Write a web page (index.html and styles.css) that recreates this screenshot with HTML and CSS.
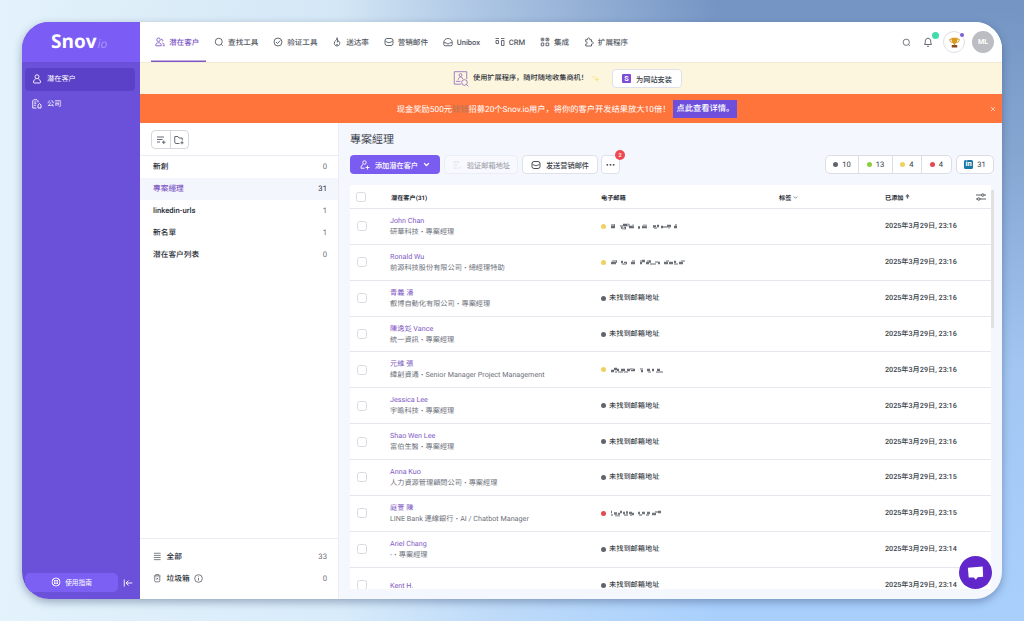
FILE: index.html
```html
<!DOCTYPE html>
<html lang="zh-CN">

<head>
  <meta charset="UTF-8">
  <meta name="viewport" content="width=device-width, initial-scale=1.0">
  <title>Snov.io</title>
  <link rel="stylesheet" href="styles.css">
</head>

<body>
  <!-- shared icons -->
  <svg class="sprite" xmlns="http://www.w3.org/2000/svg">
    <symbol id="i-mail" viewBox="0 0 20 20"><rect x="2" y="3" width="16" height="14" rx="4"/><path d="M2.500 7.500c5 5 10 5 15 0"/></symbol>
    <symbol id="i-search" viewBox="0 0 20 20"><circle cx="9.500" cy="9.500" r="7"/><path d="M14.500 14.500l3 3"/></symbol>
    <symbol id="mask-a" viewBox="0 0 68 8">
      <path d="M1 5h4M3 3.500h2M11 5.500h2M13 3h6M14 6h2M19 5h5M28 5.500h2M32 5h5M43 4.500h3M47 4h2M51 5h2M57 4h4M64 5h3" stroke="#4b4f58" stroke-width="2.400"/>
      <path d="M1 3h3M10 4h3M12 6.500h3M17 3h3M22 3.500h2M33 3.500h4M44 6h3M53 5h4M58 5.500h2M65 3h2" stroke="#9a9da4" stroke-width="2"/>
    </symbol>
    <symbol id="mask-b" viewBox="0 0 76 8">
      <path d="M1 5h5M5 3.500h2M11 4h2M14 5h3M21 5h4M30 5h2M32 3h3M36 5h3M39 3.500h2M48 5h2M54 5h4M59 5h4M64 4h2M69 5h4" stroke="#565961" stroke-width="2.400"/>
      <path d="M2 3h4M12 6h4M22 3h3M30 3h2M37 3h2M40 6h6M45 4h3M56 3h3M64 6h4M71 3h4" stroke="#a5a7ad" stroke-width="2"/>
    </symbol>
    <symbol id="mask-c" viewBox="0 0 56 8">
      <path d="M1 5h3M4 3h3M7 4h2M11 4h4M17 4h3M21 4h4M31 5h2M37 4h3M42 4h2M47 4h3" stroke="#4f525a" stroke-width="2.400"/>
      <path d="M5 6h2M8 6h5M14 6h4M20 3h3M30 3h3M38 6h3M46 6h7" stroke="#a5a7ad" stroke-width="2"/>
    </symbol>
    <symbol id="mask-d" viewBox="0 0 52 8">
      <path d="M1 3h1M4 4.500h3M8 5h2M10 3h2M13 4h2M16 3.500h2M19 4h3M22 5h2M28 4h2M32 4h3M37 4h3M42 5h4M48 3h3" stroke="#5a5d66" stroke-width="2.400"/>
      <path d="M1 6h2M5 6.500h5M14 6h4M20 6h2M29 6h3M36 6h3M45 3h3" stroke="#999ca3" stroke-width="2"/>
    </symbol>
  </svg>

  <div class="window">
    <aside class="sidebar">
      <div class="logo">Snov<span>io</span></div>
      <nav class="side-nav">
        <a class="side-link active">
          <svg class="icon" viewBox="0 0 20 20"><circle cx="10" cy="5.500" r="4"/><path d="M7.500 9.500C5 11.500 3 12.500 3 16c0 1.500.5 2 2 2h10c1.500 0 2-.5 2-2 0-3.500-2-4.500-4.500-6.500"/></svg>
          潜在客户
        </a>
        <a class="side-link">
          <svg class="icon" viewBox="0 0 20 20"><path d="M9 18H1.500V3.500l2-2H10l2 2V7M4.500 6h4M4.500 9.500h4M4.500 13h3M12 18v-6l3-3 3 3v6z"/></svg>
          公司
        </a>
      </nav>
      <div class="side-bottom">
        <button class="guide">
          <svg class="icon" viewBox="0 0 20 20"><circle cx="10" cy="10" r="8"/><circle cx="10" cy="10" r="3"/><path d="M4.500 4.500l3.300 3.300M15.500 4.500l-3.300 3.300M4.500 15.500l3.300-3.300M15.500 15.500l-3.300-3.300"/></svg>
          使用指南
        </button>
        <svg class="collapse" viewBox="0 0 20 20"><path d="M2.500 3v14M18.500 10H6.500M11 5l-5 5 5 5"/></svg>
      </div>
    </aside>

    <div class="page">
      <header class="topbar">
        <nav class="top-nav">
          <a class="top-link active">
            <svg class="icon" viewBox="0 0 20 20"><circle cx="7" cy="5.500" r="3.500"/><path d="M1.500 17.500c0-4 1.500-6 5.500-6s5.500 2 5.500 6z"/><path d="M12 5a2 2 0 1 1 2.500 4M14.500 12c3 .5 4 2.500 4 5.500h-3"/></svg>
            潜在客户
          </a>
          <a class="top-link"><svg class="icon"><use href="#i-search"/></svg>查找工具</a>
          <a class="top-link">
            <svg class="icon" viewBox="0 0 20 20"><circle cx="10" cy="10" r="8"/><path d="M6 10l3 3 5.500-6"/></svg>
            验证工具
          </a>
          <a class="top-link">
            <svg class="icon" viewBox="0 0 20 20"><path d="M10 1.500c1 4-5.500 6-5.500 11 0 3 2.500 5.500 5.500 5.500s5.500-2.500 5.500-5.500c0-2.500-1.500-4-3-5-.5 2-1 2.500-2 3 .5-3 1.500-6-.5-9zM8 15.500h4"/></svg>
            送达率
          </a>
          <a class="top-link"><svg class="icon"><use href="#i-mail"/></svg>营销邮件</a>
          <a class="top-link">
            <svg class="icon" viewBox="0 0 20 20"><path d="M1.500 10.500C2 6 5 3 10 3s8 3 8.500 7.500V15c0 1.500-1 2.500-2.500 2.500H4c-1.500 0-2.500-1-2.500-2.500zM2 11.500h4.500c.5 3 6.500 3 7 0H18"/></svg>
            Unibox
          </a>
          <a class="top-link">
            <svg class="icon" viewBox="0 0 20 20"><path d="M1 3h7M12 3h7M2 7h5v6H2zM13 7h5v10h-5z"/></svg>
            CRM
          </a>
          <a class="top-link">
            <svg class="icon" viewBox="0 0 20 20"><path d="M2.500 2.500h5v5h-5zM12 2.500h5.500v5H12zM2.500 12h5v5.500h-5zM12 12h5.500v5.500H12z"/><path d="M4 5h2M14 5h2"/></svg>
            集成
          </a>
          <a class="top-link">
            <svg class="icon" viewBox="0 0 20 20"><path d="M3 5.500h4c-1.500-5 6-5 4.500 0H15v4c4.500-1 4.500 5.500 0 4.500v4H3.500v-4c4 .5 4-5 0-4.500z"/></svg>
            扩展程序
          </a>
        </nav>
        <div class="top-tools">
          <svg class="icon search"><use href="#i-search"/></svg>
          <span class="bell">
            <svg class="icon" viewBox="0 0 20 20"><path d="M3 15h14L15.500 12V8.500c0-8-11-8-11 0V12zM8 18.500h4"/></svg>
            <i class="dot-green"></i>
          </span>
          <span class="trophy">
            <svg viewBox="0 0 20 20">
              <path d="M5 4H1.500c0 4 1.500 6 5 6M15 4h3.500c0 4-1.500 6-5 6" fill="none" stroke="#c98a12" stroke-width="1.600"/>
              <path d="M4.500 1.500h11c0 6-1 10-4.300 11v2.500H8.800v-2.500C5.500 11.500 4.500 7.500 4.500 1.500z" fill="#dc9b1c"/>
              <path d="M5 14.500h10V19H5z" fill="#8a4b22"/>
            </svg>
            <i class="dot-purple"></i>
          </span>
          <span class="avatar">ML</span>
        </div>
      </header>

      <div class="tip-bar">
        <svg class="tip-icon" viewBox="0 0 30 30"><path d="M16 25H4V3h22v13M11 17c0-6 8-6 8-1M7 20h8"/><circle cx="15" cy="9" r="2.500"/><circle cx="22" cy="22" r="5"/><path d="M26 26l3 3"/></svg>
        <span class="tip-text">使用扩展程序，随时随地收集商机！</span>
        <svg class="sparkle" viewBox="0 0 20 20"><path d="M12 4l2 5 5 2-5 2-2 5-2-5-5-2 5-2zM4 1l1 3 3 1-3 1-1 3-1-3-3-1 3-1z"/></svg>
        <button class="btn install"><b>S</b>为网站安装</button>
      </div>

      <div class="promo">
        <span>现金奖励500元<em>钱钱</em>招募20个Snov.io用户，将你的客户开发结果放大10倍！</span>
        <a class="promo-link">点此查看详情。</a>
        <svg class="close" viewBox="0 0 10 10"><path d="M1.500 1.500l7 7M8.500 1.500l-7 7"/></svg>
      </div>

      <div class="content">
        <section class="lists">
          <div class="lists-head">
            <div class="list-actions">
              <span><svg class="icon" viewBox="0 0 20 20"><path d="M2 4h14M2 9h11M2 14h6M15.500 11v7M12 14.500h7"/></svg></span>
              <span><svg class="icon" viewBox="0 0 20 20"><path d="M11 17H4c-1.500 0-2.500-1-2.500-2.500V3H8l2 3h6.500v5M16 12.500v6M13 15.500h6"/></svg></span>
            </div>
          </div>
          <ul class="list">
            <li>新創<span>0</span></li>
            <li class="active">專案經理<span>31</span></li>
            <li>linkedin-urls<span>1</span></li>
            <li>新名單<span>1</span></li>
            <li>潜在客户列表<span>0</span></li>
          </ul>
          <ul class="list lists-foot">
            <li>
              <svg class="icon" viewBox="0 0 20 20"><path d="M2 3h16M2 8h16M2 13h16M2 18h16"/></svg>
              全部<span>33</span>
            </li>
            <li>
              <svg class="icon" viewBox="0 0 20 20"><path d="M2 4.500h16M6 4V1.500h8V4M4 5v11c0 1.500 1 2.500 2.500 2.500h7c1.500 0 2.500-1 2.500-2.500V5M8 9l4 4M12 9l-4 4"/></svg>
              垃圾箱
              <svg class="icon info" viewBox="0 0 20 20"><circle cx="10" cy="10" r="8.500"/><path d="M10 9v5.500M10 5.500v1.500"/></svg>
              <span>0</span>
            </li>
          </ul>
        </section>

        <main class="main">
          <h1>專案經理</h1>
          <div class="toolbar">
            <button class="btn primary">
              <svg class="icon" viewBox="0 0 20 20"><circle cx="9" cy="5" r="3.500"/><path d="M6 9C3 10.500 2 13 2 16.500h7M15 11v8M11 15h8"/></svg>
              添加潜在客户
              <svg class="chev" viewBox="0 0 10 10"><path d="M1.500 3l3.500 3.500L8.500 3"/></svg>
            </button>
            <button class="btn disabled">
              <svg class="icon" viewBox="0 0 20 20"><path d="M3 4h12M3 10h8M3 16h6M12 15l2 2 4-4"/></svg>
              验证邮箱地址
            </button>
            <button class="btn send"><svg class="icon"><use href="#i-mail"/></svg>发送营销邮件</button>
            <button class="btn more">
              <svg viewBox="0 0 10 4"><circle cx="1.500" cy="2" r="1"/><circle cx="5" cy="2" r="1"/><circle cx="8.500" cy="2" r="1"/></svg>
              <i class="badge">2</i>
            </button>
            <div class="stats">
              <span><i class="dot gray"></i>10</span>
              <span><i class="dot green"></i>13</span>
              <span><i class="dot yellow"></i>4</span>
              <span><i class="dot red"></i>4</span>
            </div>
            <div class="linkedin"><b>in</b>31</div>
          </div>

          <div class="table-wrap">
            <div class="table">
              <div class="row head">
                <i class="check"></i>
                <span>潜在客户(31)</span>
                <span>电子邮箱</span>
                <span>标签 <svg class="caret" viewBox="0 0 10 10"><path d="M1.500 3l3.500 3.500L8.500 3"/></svg></span>
                <span>已添加 <svg class="sort" viewBox="0 0 10 10"><path d="M5 0l4.500 5H6.500v4h-3V5H.5z"/></svg></span>
                <svg class="icon settings" viewBox="0 0 20 20"><path d="M0 6h11M16 6h4M0 14h3M8 14h12"/><circle cx="13.500" cy="6" r="2.500"/><circle cx="5.500" cy="14" r="2.500"/></svg>
              </div>
              <div class="row">
                <i class="check"></i>
                <div class="person"><a>John Chan</a><p>研華科技 <s>•</s> 專案經理</p></div>
                <div class="mail"><i class="dot yellow"></i><svg class="mask mask-a"><use href="#mask-a"/></svg></div>
                <time>2025年3月29日, 23:16</time>
              </div>
              <div class="row">
                <i class="check"></i>
                <div class="person"><a>Ronald Wu</a><p>前源科技股份有限公司 <s>•</s> 總經理特助</p></div>
                <div class="mail"><i class="dot yellow"></i><svg class="mask mask-b"><use href="#mask-b"/></svg></div>
                <time>2025年3月29日, 23:16</time>
              </div>
              <div class="row">
                <i class="check"></i>
                <div class="person"><a>青義 潘</a><p>叡博自動化有限公司 <s>•</s> 專案經理</p></div>
                <div class="mail"><i class="dot gray"></i>未找到邮箱地址</div>
                <time>2025年3月29日, 23:16</time>
              </div>
              <div class="row">
                <i class="check"></i>
                <div class="person"><a>陳逸彣 Vance</a><p>統一資訊 <s>•</s> 專案經理</p></div>
                <div class="mail"><i class="dot gray"></i>未找到邮箱地址</div>
                <time>2025年3月29日, 23:16</time>
              </div>
              <div class="row">
                <i class="check"></i>
                <div class="person"><a>元維 張</a><p>緯創資通 <s>•</s> Senior Manager Project Management</p></div>
                <div class="mail"><i class="dot yellow"></i><svg class="mask mask-c"><use href="#mask-c"/></svg></div>
                <time>2025年3月29日, 23:16</time>
              </div>
              <div class="row">
                <i class="check"></i>
                <div class="person"><a>Jessica Lee</a><p>宇瞻科技 <s>•</s> 專案經理</p></div>
                <div class="mail"><i class="dot gray"></i>未找到邮箱地址</div>
                <time>2025年3月29日, 23:16</time>
              </div>
              <div class="row">
                <i class="check"></i>
                <div class="person"><a>Shao Wen Lee</a><p>富伯生醫 <s>•</s> 專案經理</p></div>
                <div class="mail"><i class="dot gray"></i>未找到邮箱地址</div>
                <time>2025年3月29日, 23:16</time>
              </div>
              <div class="row">
                <i class="check"></i>
                <div class="person"><a>Anna Kuo</a><p>人力資源管理顧問公司 <s>•</s> 專案經理</p></div>
                <div class="mail"><i class="dot gray"></i>未找到邮箱地址</div>
                <time>2025年3月29日, 23:15</time>
              </div>
              <div class="row">
                <i class="check"></i>
                <div class="person"><a>庭萱 陳</a><p>LINE Bank 連線銀行 <s>•</s> AI / Chatbot Manager</p></div>
                <div class="mail"><i class="dot red"></i><svg class="mask mask-d"><use href="#mask-d"/></svg></div>
                <time>2025年3月29日, 23:15</time>
              </div>
              <div class="row">
                <i class="check"></i>
                <div class="person"><a>Ariel Chang</a><p>- <s>•</s> 專案經理</p></div>
                <div class="mail"><i class="dot gray"></i>未找到邮箱地址</div>
                <time>2025年3月29日, 23:14</time>
              </div>
              <div class="row">
                <i class="check"></i>
                <div class="person"><a>Kent H.</a></div>
                <div class="mail"><i class="dot gray"></i>未找到邮箱地址</div>
                <time>2025年3月29日, 23:14</time>
              </div>
            </div>
            <div class="scrollbar"></div>
          </div>
        </main>
      </div>
    </div>

    <button class="chat">
      <svg viewBox="0 0 20 20"><path d="M1 4.500L18.500 3l.5 12-6.500.5-2 3-2.500-2.700-6 .2z"/></svg>
    </button>
  </div>
</body>

</html>
```
FILE: styles.css
```css
* {
  box-sizing: border-box;
  margin: 0;
  padding: 0;
}

body {
  width: 1024px;
  height: 621px;
  padding: 22px;
  overflow: hidden;
  font-family: Roboto, 'Noto Sans CJK SC', sans-serif;
  font-size: 7.2px;
  text-rendering: geometricPrecision;
  color: #3a3f4a;
  background:
    linear-gradient(90deg, #e3f2fb 0%, rgba(220, 238, 250, 0.92) 33%, rgba(205, 226, 246, 0.6) 48%, rgba(190, 215, 240, 0) 70%),
    linear-gradient(180deg, #7494c3 0%, #86a6d2 25%, #a3c6f2 60%, #a9d0fd 100%);
}

i,
em {
  font-style: normal;
}

button {
  font-family: inherit;
  border: none;
}

.sprite {
  display: none;
}

.icon {
  flex: none;
  width: 10px;
  height: 10px;
  fill: none;
  stroke: currentColor;
  stroke-width: 1.8;
}

.window {
  position: relative;
  display: flex;
  width: 980px;
  height: 577px;
  border-radius: 27px;
  overflow: hidden;
  background: #f5f7fe;
  box-shadow: 0 3px 8px rgba(40, 60, 100, 0.4);
}

/* sidebar */
.sidebar {
  display: flex;
  flex-direction: column;
  width: 118px;
  background: #6b51d9;
  color: #fff;
}

.logo {
  height: 40px;
  padding-left: 29px;
  font: bold 19px/38px 'Open Sans', sans-serif;
  background: #7b5cf5;
}

.logo span {
  margin-left: 1px;
  font-size: 12px;
  font-weight: 400;
  font-style: italic;
  color: #ab97f9;
}

.side-nav {
  display: flex;
  flex-direction: column;
  gap: 2px;
  padding: 6px 5px 0 3px;
}

.side-link {
  display: flex;
  align-items: center;
  gap: 5px;
  height: 23px;
  padding: 0 0 1px 7px;
  border-radius: 4px;
}

.side-link.active {
  background: #5b41c7;
}

.side-bottom {
  display: flex;
  align-items: center;
  gap: 5px;
  margin-top: auto;
  padding: 0 0 7px 3px;
}

.guide {
  display: flex;
  align-items: center;
  justify-content: center;
  gap: 4px;
  width: 93px;
  height: 19px;
  padding-bottom: 1px;
  border-radius: 5px;
  font-size: 6.7px;
  color: #fff;
  background: #7c5ff3;
}

.collapse {
  width: 10px;
  height: 10px;
  fill: none;
  stroke: #fff;
  stroke-width: 1.8;
}

/* top bar */
.page {
  display: flex;
  flex: 1;
  flex-direction: column;
}

.topbar {
  display: flex;
  justify-content: space-between;
  height: 40px;
  padding: 0 8px 0 11px;
  background: #fff;
}

.top-nav {
  display: flex;
  gap: 6.7px;
}

.top-link {
  display: flex;
  align-items: center;
  gap: 4px;
  padding: 0 4px;
  font-size: 7.6px;
  font-weight: 500;
  color: #555a65;
  white-space: nowrap;
}

.top-link.active {
  margin-right: -3px;
  padding-right: 7px;
  color: #8059c4;
  box-shadow: inset 0 -1.5px #8059c4;
}

.top-tools {
  display: flex;
  align-items: center;
  color: #555a65;
}

.search {
  width: 9px;
  height: 9px;
  margin-right: 12px;
}

.bell {
  position: relative;
  display: flex;
  margin-right: 10px;
}

.trophy {
  position: relative;
  display: flex;
  align-items: center;
  justify-content: center;
  width: 22px;
  height: 22px;
  margin-right: 7px;
  border: 1px solid #dedfe8;
  border-radius: 50%;
}

.trophy svg {
  width: 11px;
  height: 11px;
}

.dot-green,
.dot-purple {
  position: absolute;
  border-radius: 50%;
}

.dot-green {
  top: -5px;
  right: -6px;
  width: 7px;
  height: 7px;
  background: #43dba9;
}

.dot-purple {
  top: 1px;
  right: 0;
  width: 4px;
  height: 4px;
  background: #7d5fd3;
}

.avatar {
  width: 22px;
  height: 22px;
  border-radius: 50%;
  background: #bcbdc2;
  color: #fff;
  font-weight: 700;
  line-height: 22px;
  text-align: center;
}

/* banners */
.tip-bar {
  display: flex;
  align-items: center;
  justify-content: center;
  height: 32px;
  padding-right: 8px;
  border-top: 1px solid #f1ebd5;
  background: #fdf6df;
  color: #2e323b;
}

.tip-icon {
  width: 17px;
  height: 17px;
  margin-right: 4px;
  fill: none;
  stroke: #9874c6;
  stroke-width: 1.6;
}

.tip-text {
  padding-bottom: 1px;
  font-weight: 500;
}

.sparkle {
  width: 8px;
  height: 8px;
  margin: 0 12px 0 4px;
  fill: #f7e78e;
}

.btn {
  display: flex;
  align-items: center;
  justify-content: center;
  gap: 5px;
  height: 19px;
  border: 1px solid #dfe1ea;
  border-radius: 4px;
  background: #fff;
  color: #3a3f4a;
  font-size: 7.2px;
  font-weight: 500;
  white-space: nowrap;
}

.install {
  width: 70px;
}

.install b {
  width: 9px;
  height: 9px;
  border-radius: 1px;
  background: #7e4dd6;
  color: #fff;
  line-height: 9px;
}

.promo {
  position: relative;
  display: flex;
  align-items: center;
  justify-content: center;
  gap: 3px;
  height: 29px;
  padding-right: 8px;
  background: #ff743b;
  color: #fff;
  font-size: 8.25px;
}

.promo em {
  color: #a8785e;
}

.promo-link {
  padding: 0 3px;
  background: #6d4fdc;
  font-weight: 500;
  line-height: 18px;
}

.close {
  position: absolute;
  right: 6px;
  width: 6px;
  height: 6px;
  stroke: #fff;
}

/* list panel */
.content {
  display: flex;
  flex: 1;
  min-height: 0;
}

.lists {
  display: flex;
  flex-direction: column;
  width: 199px;
  border-right: 1px solid #ececf3;
  background: #fff;
}

.lists-head {
  height: 33px;
  padding: 7px 11px;
  border-bottom: 1px solid #ebecf1;
}

.list-actions {
  display: flex;
  width: 38px;
  height: 19px;
  border: 1px solid #d5d7de;
  border-radius: 4px;
  color: #555a65;
}

.list-actions span {
  display: flex;
  flex: 1;
  align-items: center;
  justify-content: center;
}

.list-actions span + span {
  border-left: 1px solid #d5d7de;
}

.list {
  list-style: none;
}

.list li {
  display: flex;
  align-items: center;
  height: 22px;
  padding: 0 11px 1px 13px;
  font-size: 7.7px;
  font-weight: 500;
  color: #282c35;
}

.list li span {
  margin-left: auto;
  font-weight: 400;
  color: #6b6f79;
}

.list li.active {
  background: #f4f6fd;
  color: #8059c4;
}

.list li.active span {
  color: #282c35;
}

.lists-foot {
  margin-top: auto;
  padding: 7px 0 9px;
  border-top: 1px solid #ebecf1;
}

.lists-foot .icon {
  width: 8.5px;
  height: 8.5px;
  margin-right: 5px;
  color: #555a65;
}

.lists-foot .info {
  width: 9px;
  height: 9px;
  margin-left: 4px;
}

/* main */
.main {
  display: flex;
  flex: 1;
  flex-direction: column;
  min-width: 0;
  padding: 9px 8px 10px 11px;
}

h1 {
  font-size: 11px;
  font-weight: 400;
  line-height: 16px;
}

.toolbar {
  display: flex;
  margin-top: 7px;
}

.toolbar .btn {
  margin-right: 4px;
}

.toolbar .primary {
  width: 90px;
  border: none;
  background: #7b5cf0;
  color: #fff;
}

.chev {
  width: 7px;
  height: 7px;
  fill: none;
  stroke: currentColor;
  stroke-width: 1.8;
}

.toolbar .disabled {
  width: 74px;
  border-color: #eceef5;
  background: #f8f9fe;
  color: #a2a5ad;
}

.disabled .icon {
  opacity: 0.3;
}

.send {
  width: 76px;
}

.toolbar .more {
  position: relative;
  width: 19px;
  margin-left: -1px;
}

.more svg {
  width: 9px;
  fill: #3a3f4a;
}

.badge {
  position: absolute;
  top: -6px;
  right: -6px;
  width: 10px;
  height: 10px;
  border-radius: 50%;
  background: #ec4a52;
  color: #fff;
  font-size: 5.5px;
  line-height: 10px;
  text-align: center;
}

.stats,
.linkedin {
  height: 19px;
  border: 1px solid #dcdee7;
  border-radius: 5px;
  background: #fff;
  font-size: 7.6px;
}

.stats {
  display: grid;
  grid-template-columns: 32px 34px 29px 30px;
  margin-left: auto;
}

.stats span {
  display: flex;
  align-items: center;
  justify-content: center;
  gap: 4px;
}

.stats span + span {
  border-left: 1px solid #dcdee7;
}

.linkedin {
  display: flex;
  align-items: center;
  justify-content: center;
  gap: 4px;
  width: 38px;
  margin-left: 4px;
}

.linkedin b {
  width: 9px;
  height: 9px;
  border-radius: 1.5px;
  background: #1c78a8;
  color: #fff;
  line-height: 8.5px;
  text-align: center;
}

.dot {
  flex: none;
  width: 5px;
  height: 5px;
  border-radius: 50%;
}

.gray { background: #60646d; }
.green { background: #8bcf3a; }
.yellow { background: #f0d062; }
.red { background: #e5484f; }

/* table */
.table-wrap {
  display: flex;
  flex: 1;
  min-height: 0;
  margin-top: 11px;
}

.table {
  width: 641px;
  overflow: hidden;
  background: #fff;
}

.row {
  display: grid;
  grid-template-columns: 40px 211px 284px 1fr;
  align-items: center;
  height: 35.87px;
  border-bottom: 1px solid #e6e7ec;
}

.row.head {
  grid-template-columns: 41px 210px 178px 106px 1fr 15px;
  height: 24px;
  padding-top: 1px;
  font-size: 6.2px;
  font-weight: 700;
  color: #282c35;
}

.check {
  width: 10px;
  height: 10px;
  margin-left: 7px;
  border: 1px solid #d9dae1;
  border-radius: 2.5px;
  background: #fff;
}

.head .check {
  margin-left: 6px;
}

.person {
  line-height: 11px;
}

.person a {
  color: #8059c4;
}

.person p {
  color: #6d717b;
}

.person s {
  margin: 0 0.5px;
  font-size: 6.5px;
  text-decoration: none;
}

.mail {
  display: flex;
  align-items: center;
  gap: 3px;
}

.mail,
time {
  font-weight: 500;
}

.mask {
  height: 8px;
  margin-left: 1px;
  opacity: 0.85;
}

.mask-a { width: 68px; }
.mask-b { width: 76px; }
.mask-c { width: 56px; }
.mask-d { width: 52px; }

.caret {
  width: 5px;
  height: 5px;
  fill: none;
  stroke: #60646d;
  stroke-width: 1.5;
}

.sort {
  width: 5px;
  height: 5px;
  vertical-align: 1px;
  fill: #60646d;
}

.settings {
  stroke-width: 1.5;
}

.scrollbar {
  width: 3px;
  height: 138px;
  margin-top: 5px;
  background: #e0e1e3;
}

.chat {
  position: absolute;
  right: 10px;
  bottom: 10px;
  display: flex;
  align-items: center;
  justify-content: center;
  width: 33px;
  height: 33px;
  border-radius: 50%;
  background: #6127cb;
}

.chat svg {
  width: 17px;
  height: 17px;
  fill: #fff;
}
```
